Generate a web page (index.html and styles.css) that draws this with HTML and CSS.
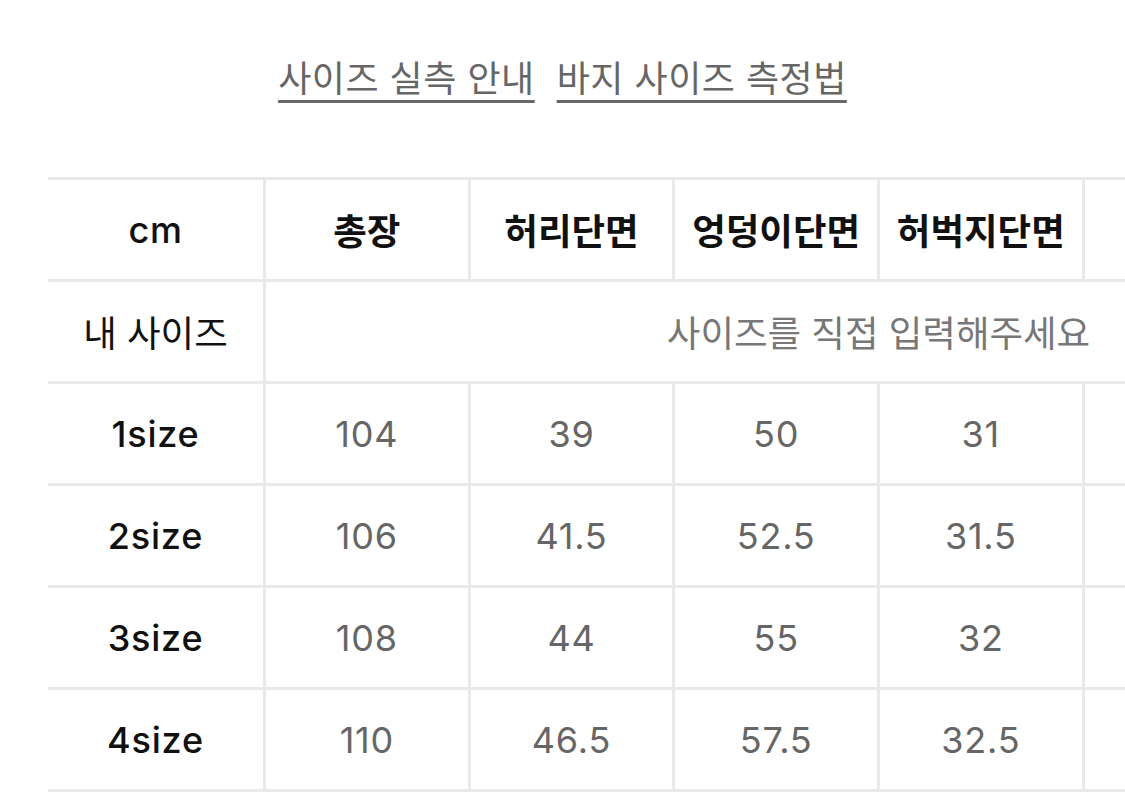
FILE: index.html
```html
<!DOCTYPE html>
<html lang="ko">
<head>
<meta charset="utf-8">
<link rel="stylesheet" href="styles.css">
</head>
<body>
<div class="page">
  <nav class="guide-links">
    <a class="guide-link" href="#">사이즈 실측 안내</a>
    <a class="guide-link" href="#">바지 사이즈 측정법</a>
  </nav>
  <table class="size-table">
    <colgroup>
      <col class="col-label">
      <col class="col-data"><col class="col-data"><col class="col-data">
      <col class="col-data"><col class="col-data"><col class="col-data">
    </colgroup>
    <thead>
      <tr>
        <th>cm</th><th>총장</th><th>허리단면</th><th>엉덩이단면</th><th>허벅지단면</th><th></th><th></th>
      </tr>
    </thead>
    <tbody>
      <tr class="my-size">
        <th class="row-label regular">내 사이즈</th>
        <td colspan="6" class="hint">사이즈를 직접 입력해주세요</td>
      </tr>
      <tr><th class="row-label">1size</th><td>104</td><td>39</td><td>50</td><td>31</td><td></td><td></td></tr>
      <tr><th class="row-label">2size</th><td>106</td><td>41.5</td><td>52.5</td><td>31.5</td><td></td><td></td></tr>
      <tr><th class="row-label">3size</th><td>108</td><td>44</td><td>55</td><td>32</td><td></td><td></td></tr>
      <tr><th class="row-label">4size</th><td>110</td><td>46.5</td><td>57.5</td><td>32.5</td><td></td><td></td></tr>
    </tbody>
  </table>
</div>
</body>
</html>
```

FILE: styles.css
```css
html, body {
  margin: 0;
  padding: 0;
  background: #ffffff;
  overflow: hidden;
}

body {
  font-family: Inter, "Noto Sans CJK KR", sans-serif;
  width: 1125px;
  height: 798px;
}

.page {
  padding-top: 52px;
}

.guide-links {
  display: flex;
  justify-content: center;
  gap: 22px;
  height: 52px;
}

.guide-link {
  font-family: "Noto Sans CJK KR", sans-serif;
  font-size: 36px;
  line-height: 48px;
  color: #666666;
  text-decoration: underline;
  text-decoration-thickness: 3px;
  text-underline-offset: 8px;
  letter-spacing: 0.5px;
}

.size-table {
  margin-top: 73px;
  margin-left: 48px;
  table-layout: fixed;
  width: 1446px;
  border-collapse: separate;
  border-spacing: 0;
  border-top: 3px solid #e9e9e9;
}

.col-label {
  width: 218px;
}

.col-data {
  width: 204.67px;
}

.size-table th,
.size-table td {
  height: 99px;
  padding: 0;
  text-align: center;
  vertical-align: middle;
  border-bottom: 3px solid #e9e9e9;
  border-right: 3px solid #e9e9e9;
  font-size: 36px;
  letter-spacing: 0.8px;
  white-space: nowrap;
}

.size-table thead th {
  font-family: "Noto Sans CJK KR", sans-serif;
  font-weight: 700;
  font-size: 36.5px;
  letter-spacing: 0;
  color: #111111;
}

.size-table thead th:first-child {
  font-family: Inter, "Noto Sans CJK KR", sans-serif;
  font-weight: 500;
  font-size: 36px;
  letter-spacing: 0.5px;
}

.row-label {
  font-weight: 500;
  color: #111111;
}

.size-table .row-label.regular {
  font-family: "Noto Sans CJK KR", sans-serif;
  font-weight: 400;
  font-size: 36.5px;
  letter-spacing: 0;
}

.size-table td {
  color: #666666;
  font-weight: 400;
}

.size-table .hint {
  font-family: "Noto Sans CJK KR", sans-serif;
  font-size: 36.5px;
  letter-spacing: 0;
  color: #777777;
}
```
